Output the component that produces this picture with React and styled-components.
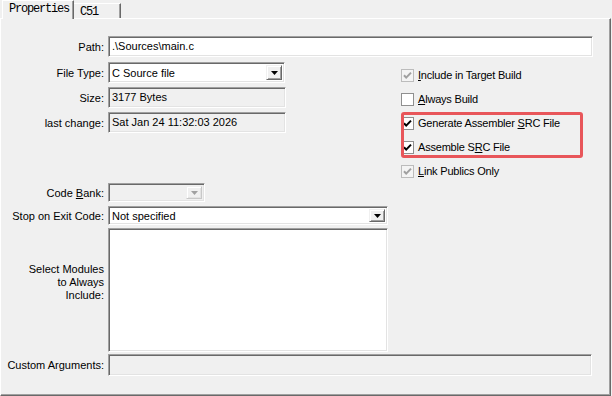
import styled, { createGlobalStyle, css } from "styled-components";

const GlobalStyle = createGlobalStyle`
  html, body {
    margin: 0;
    padding: 0;
    background: #f0f0f0;
  }
  body {
    font-family: "Liberation Sans", Arial, sans-serif;
    font-size: 11px;
    color: #000;
  }
`;

const sunken = css`
  box-sizing: border-box;
  border: 1px solid;
  border-color: #a0a0a0 #ffffff #ffffff #a0a0a0;
  box-shadow: inset 1px 1px 0 #696969, inset -1px -1px 0 #e3e3e3;
`;

const raised = css`
  box-sizing: border-box;
  border: 1px solid;
  border-color: #f0f0f0 #696969 #696969 #f0f0f0;
  box-shadow: inset 1px 1px 0 #ffffff, inset -1px -1px 0 #a0a0a0;
`;

const Arrow = ({ color = "#000" }) => (
  <svg width="7" height="4" viewBox="0 0 7 4">
    <polygon points="0,0 7,0 3.5,4" fill={color} />
  </svg>
);

const Tick = ({ color = "#000" }) => (
  <svg width="11" height="11" viewBox="0 0 11 11">
    <path d="M2 5.2 L4.2 7.6 L9 2.6" stroke={color} strokeWidth="2" fill="none" />
  </svg>
);

const Properties = () => {
  return (
    <Window>
      <GlobalStyle />
      <TabStrip>
        <Tab $active>Properties</Tab>
        <Tab>C51</Tab>
      </TabStrip>
      <Panel>
        <Row>
          <Label>Path:</Label>
          <Field $w={485} $h={21}>.\Sources\main.c</Field>
        </Row>

        <Columns>
          <FormColumn>
            <Row>
              <Label>File Type:</Label>
              <Select $w={177} $h={21}>
                <SelectText>C Source file</SelectText>
                <DropButton>
                  <Arrow />
                </DropButton>
              </Select>
            </Row>
            <Row>
              <Label>Size:</Label>
              <Field $w={178} $h={21} $readOnly>3177 Bytes</Field>
            </Row>
            <Row>
              <Label>last change:</Label>
              <Field $w={178} $h={21} $readOnly>Sat Jan 24 11:32:03 2026</Field>
            </Row>
          </FormColumn>

          <CheckColumn>
            <CheckRow>
              <Box $disabled>
                <Tick color="#a0a0a0" />
              </Box>
              <span><Key>I</Key>nclude in Target Build</span>
            </CheckRow>
            <CheckRow>
              <Box />
              <span><Key>A</Key>lways Build</span>
            </CheckRow>
            <Highlight>
              <CheckRow>
                <Box>
                  <Tick />
                </Box>
                <span>Generate Assembler <Key>S</Key>RC File</span>
              </CheckRow>
              <CheckRow>
                <Box>
                  <Tick />
                </Box>
                <span>Assemble S<Key>R</Key>C File</span>
              </CheckRow>
            </Highlight>
            <CheckRow>
              <Box $disabled>
                <Tick color="#a0a0a0" />
              </Box>
              <span><Key>L</Key>ink Publics Only</span>
            </CheckRow>
          </CheckColumn>
        </Columns>

        <Row>
          <Label>Code <Key>B</Key>ank:</Label>
          <Select $w={97} $h={19} $disabled>
            <SelectText />
            <DropButton $disabled>
              <Arrow color="#a0a0a0" />
            </DropButton>
          </Select>
        </Row>
        <Row $mt={4}>
          <Label>Stop on Exit Code:</Label>
          <Select $w={280} $h={19}>
            <SelectText>Not specified</SelectText>
            <DropButton>
              <Arrow />
            </DropButton>
          </Select>
        </Row>
        <Row $mt={3} $top>
          <Label $multi>
            Select Modules
            <br />
            to Always
            <br />
            Include:
          </Label>
          <ListBox />
        </Row>
        <Row $mt={2}>
          <Label>Custom Ar<Key>g</Key>uments:</Label>
          <Field $w={484} $h={22} $readOnly />
        </Row>
      </Panel>
    </Window>
  );
};

const Window = styled.div`
  width: 612px;
  height: 396px;
  box-sizing: border-box;
  padding-right: 1px;
  display: flex;
  flex-direction: column;
  overflow: hidden;
`;

const TabStrip = styled.div`
  position: relative;
  z-index: 1;
  display: flex;
  align-items: flex-end;
  height: 18px;
  padding-left: 2px;
`;

const Tab = styled.div`
  box-sizing: border-box;
  display: flex;
  align-items: center;
  background: #f0f0f0;
  font-family: "Liberation Mono", "Courier New", monospace;
  font-size: 12px;
  letter-spacing: -1.2px;
  border-top: 1px solid #ffffff;
  border-right: 1px solid #696969;
  box-shadow: inset -1px 0 0 #a0a0a0;
  ${(p) =>
    p.$active
      ? css`
          width: 72px;
          height: 19px;
          margin-bottom: -1px;
          padding: 0 0 2px 6px;
          border-left: 1px solid #ffffff;
        `
      : css`
          width: 47px;
          height: 15px;
          padding: 2px 0 0 6px;
        `}
`;

const Panel = styled.div`
  flex: 1;
  box-sizing: border-box;
  border-top: 1px solid #ffffff;
  border-left: 1px solid #ffffff;
  border-right: 1px solid #696969;
  border-bottom: 1px solid #696969;
  box-shadow: inset -1px -1px 0 #a0a0a0;
  padding-top: 17px;
`;

const Row = styled.div`
  display: flex;
  align-items: ${(p) => (p.$top ? "flex-start" : "center")};
  gap: 4px;
  margin-top: ${(p) => p.$mt || 0}px;
`;

const Label = styled.div`
  flex-shrink: 0;
  width: 103px;
  text-align: right;
  white-space: nowrap;
  ${(p) =>
    p.$multi &&
    css`
      padding-top: 35px;
      line-height: 13px;
    `}
`;

const Key = styled.u`
  text-decoration: underline;
  text-underline-offset: 1px;
`;

const Field = styled.div`
  ${sunken};
  width: ${(p) => p.$w}px;
  height: ${(p) => p.$h}px;
  padding: 3px 3px 0;
  background: ${(p) => (p.$readOnly ? "#f0f0f0" : "#ffffff")};
  white-space: nowrap;
  overflow: hidden;
`;

const Select = styled.div`
  ${sunken};
  width: ${(p) => p.$w}px;
  height: ${(p) => p.$h}px;
  display: flex;
  align-items: stretch;
  padding: 2px;
  background: ${(p) => (p.$disabled ? "#f0f0f0" : "#ffffff")};
`;

const SelectText = styled.div`
  flex: 1;
  display: flex;
  align-items: center;
  padding-left: 1px;
  white-space: nowrap;
`;

const DropButton = styled.div`
  ${raised};
  width: 16px;
  display: flex;
  align-items: center;
  justify-content: center;
  background: #f0f0f0;
  ${(p) =>
    p.$disabled &&
    css`
      border-color: #f0f0f0 #c8c8c8 #c8c8c8 #f0f0f0;
      box-shadow: inset 1px 1px 0 #ffffff, inset -1px -1px 0 #e3e3e3;
    `}
`;

const ListBox = styled.div`
  ${sunken};
  width: 280px;
  height: 124px;
  background: #ffffff;
`;

const Columns = styled.div`
  display: grid;
  grid-template-columns: 285px 1fr;
  margin-top: 5px;
`;

const FormColumn = styled.div`
  display: flex;
  flex-direction: column;
  gap: 4px;
`;

const CheckColumn = styled.div`
  display: flex;
  flex-direction: column;
  padding: 1px 0 0 115px;
`;

const CheckRow = styled.div`
  display: flex;
  align-items: center;
  gap: 4px;
  height: 24px;
  white-space: nowrap;
  letter-spacing: -0.2px;
`;

const Box = styled.div`
  box-sizing: border-box;
  width: 13px;
  height: 13px;
  display: flex;
  align-items: center;
  justify-content: center;
  border: 1px solid ${(p) => (p.$disabled ? "#bcbcbc" : "#8f8f8f")};
  background: ${(p) => (p.$disabled ? "#f4f4f4" : "#ffffff")};
`;

const Highlight = styled.div`
  position: relative;
  width: 182px;

  &::after {
    content: "";
    position: absolute;
    inset: 1px 0 1px 0;
    border: 3px solid #e8565a;
    border-radius: 3px;
    pointer-events: none;
  }
`;

export default Properties;
